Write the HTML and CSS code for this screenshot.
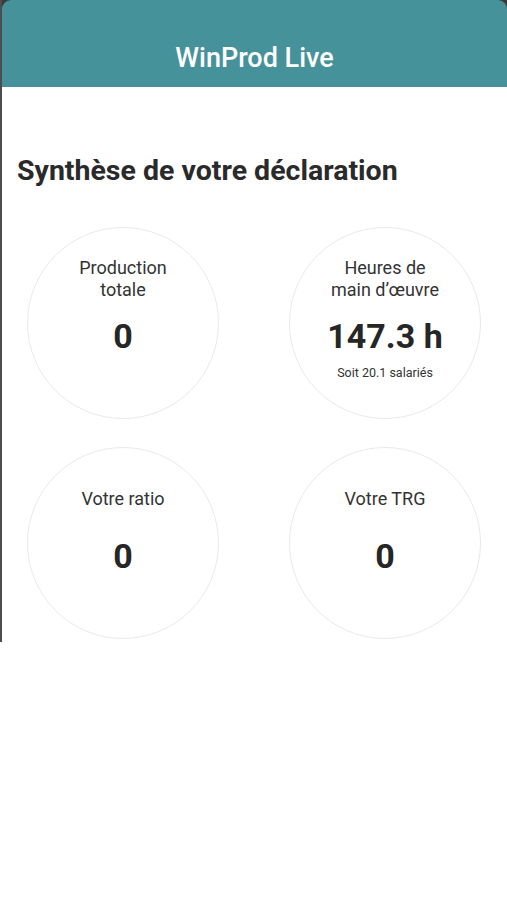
FILE: index.html
```html
<!DOCTYPE html>
<html lang="fr">
<head>
    <meta charset="UTF-8">
    <meta name="viewport" content="width=device-width, initial-scale=1.0">
    <title>WinProd Live</title>
    <link rel="stylesheet" href="styles.css">
</head>
<body>
    <div class="screen">
        <div class="top">
            <header class="appbar">WinProd Live</header>
        </div>
        <main class="content">
            <h1 class="title">Synthèse de votre déclaration</h1>
            <div class="stats">
                <div class="stat">
                    <div class="stat-label">Production<br>totale</div>
                    <div class="stat-value">0</div>
                </div>
                <div class="stat">
                    <div class="stat-label">Heures de<br>main d’œuvre</div>
                    <div class="stat-value">147.3 h</div>
                    <div class="stat-sub">Soit 20.1 salariés</div>
                </div>
                <div class="stat">
                    <div class="stat-label">Votre ratio</div>
                    <div class="stat-value">0</div>
                </div>
                <div class="stat">
                    <div class="stat-label">Votre TRG</div>
                    <div class="stat-value">0</div>
                </div>
            </div>
        </main>
    </div>
</body>
</html>
```

FILE: styles.css
```css
body, html {
    margin: 0;
    padding: 0;
    background-color: #fff;
    font-family: Roboto, "Noto Sans", Arial, sans-serif;
}
.screen {
    height: 642px;
    border-left: 2px solid #4d4d4d;
    box-sizing: border-box;
}
.top {
    background: #3a3a3a;
}
.appbar {
    height: 87px;
    box-sizing: border-box;
    padding-top: 42px;
    background: #46929b;
    border-radius: 9px 9px 0 0;
    color: #fff;
    font-size: 27px;
    font-weight: 500;
    line-height: 32px;
    text-align: center;
}
.content {
    padding: 0 0 0 15px;
}
.title {
    margin: 67px 0 0;
    font-size: 28.5px;
    font-weight: 700;
    line-height: 34px;
    color: #2a2a2a;
}
.stats {
    display: grid;
    grid-template-columns: 192px 192px;
    column-gap: 70px;
    row-gap: 28px;
    margin: 39px 0 0 10px;
}
.stat {
    width: 192px;
    height: 192px;
    box-sizing: border-box;
    border: 1px solid #e9e9e9;
    border-radius: 50%;
    padding-top: 29px;
    display: flex;
    flex-direction: column;
    align-items: center;
    text-align: center;
    color: #2e2e2e;
}
.stat-label {
    height: 44px;
    display: flex;
    align-items: center;
    font-size: 18px;
    line-height: 22px;
    color: #333;
}
.stat-value {
    margin-top: 15px;
    font-size: 34px;
    font-weight: 700;
    line-height: 40px;
    color: #262626;
}
.stat-sub {
    margin-top: 9px;
    font-size: 12.5px;
    line-height: 16px;
    color: #333;
}
```
